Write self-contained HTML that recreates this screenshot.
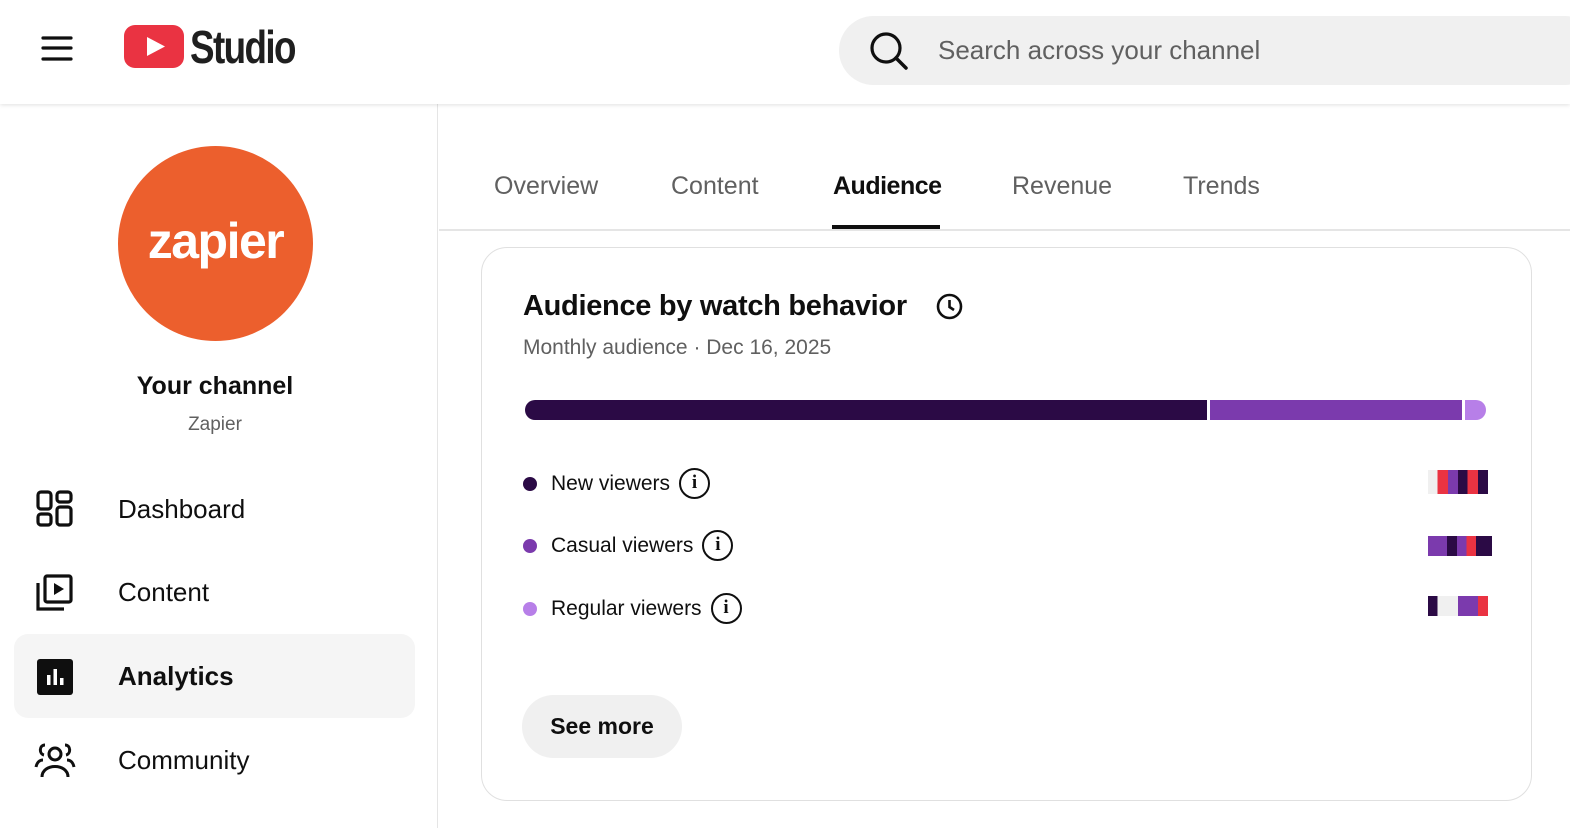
<!DOCTYPE html>
<html><head><meta charset="utf-8"><style>
*{margin:0;padding:0;box-sizing:border-box}
body{width:1570px;height:828px;overflow:hidden;background:#fff;font-family:"Liberation Sans",Roboto,sans-serif;color:#0f0f0f;position:relative}
.hdr{position:absolute;left:0;top:0;width:1570px;height:104px;background:#fff;box-shadow:0 1px 4px rgba(0,0,0,.12);z-index:2}
.search{position:absolute;left:839px;top:16px;width:760px;height:69px;border-radius:35px;background:#f0f0f0}
.search span{position:absolute;left:99px;top:19px;font-size:26px;color:#606060}
.side{position:absolute;left:0;top:104px;width:438px;height:724px;border-right:1px solid #e5e5e5}
.av{position:absolute;left:118px;top:146px;width:195px;height:195px;border-radius:50%;background:#EC5F2D;color:#fff;font-weight:bold;font-size:50px;text-align:center;line-height:190px;letter-spacing:-1.5px}
.nav{position:absolute;left:118px;font-size:26px}
.tab{position:absolute;top:172px;font-size:25px;color:#606060}
.card{position:absolute;left:481px;top:247px;width:1051px;height:554px;border:1px solid #e0e0e0;border-radius:26px}
.leg{position:absolute;left:523px;font-size:21px;display:flex;align-items:center}
.dot{width:14px;height:14px;border-radius:50%;margin-right:14px}
.i{width:31px;height:31px;border:2.5px solid #0f0f0f;border-radius:50%;margin-left:9px;font-weight:bold;font-family:"Liberation Serif",serif;font-size:19px;text-align:center;line-height:26px}
</style></head><body>
<div class="hdr">
 <svg style="position:absolute;left:40px;top:35px" width="34" height="28"><g stroke="#0f0f0f" stroke-width="3.2" stroke-linecap="round"><line x1="3" y1="3" x2="31" y2="3"/><line x1="3" y1="13" x2="31" y2="13"/><line x1="3" y1="24" x2="31" y2="24"/></g></svg>
 <svg style="position:absolute;left:124px;top:25px" width="60" height="43"><rect width="60" height="43" rx="11" fill="#EA3342"/><path d="M23 12 L41 21.5 L23 31Z" fill="#fff"/></svg>
 <div style="position:absolute;left:190px;top:20px;font-size:46px;font-weight:bold;letter-spacing:-2px;transform:scaleX(.8);transform-origin:left;color:#1f1f1f">Studio</div>
 <div class="search"><svg style="position:absolute;left:29px;top:14px" width="42" height="42"><circle cx="18" cy="18" r="14" fill="none" stroke="#0f0f0f" stroke-width="3.2"/><line x1="28" y1="28" x2="38" y2="38" stroke="#0f0f0f" stroke-width="3.5" stroke-linecap="round"/></svg><span>Search across your channel</span></div>
</div>
<div class="side"></div>
<div class="av">zapier</div>
<div style="position:absolute;left:0;width:430px;text-align:center;top:372px;font-size:25px;font-weight:bold;color:#0f0f0f">Your channel</div>
<div style="position:absolute;left:0;width:430px;text-align:center;top:414px;font-size:19px;color:#606060">Zapier</div>
<div style="position:absolute;left:14px;top:634px;width:401px;height:84px;border-radius:14px;background:#f5f5f5"></div>
<svg style="position:absolute;left:36px;top:490px" width="38" height="38" fill="none" stroke="#0f0f0f" stroke-width="3.2"><rect x="2" y="2" width="13" height="17" rx="3"/><rect x="2" y="24" width="13" height="11" rx="3"/><rect x="21" y="2" width="14" height="10" rx="3"/><rect x="21" y="17" width="14" height="18" rx="3"/></svg>
<div class="nav" style="top:494px">Dashboard</div>
<svg style="position:absolute;left:36px;top:574px" width="38" height="38" fill="none" stroke="#0f0f0f" stroke-width="3.2"><rect x="9" y="2" width="26" height="26" rx="2"/><path d="M2 9 V35 H28" /><path d="M18 9 L28 15 L18 21Z" fill="#0f0f0f" stroke="none"/></svg>
<div class="nav" style="top:577px">Content</div>
<svg style="position:absolute;left:37px;top:659px" width="36" height="36"><rect width="36" height="36" rx="3" fill="#0f0f0f"/><g fill="#fff"><rect x="10" y="16" width="3.5" height="10"/><rect x="16.5" y="10" width="3.5" height="16"/><rect x="23" y="19" width="3.5" height="7"/></g></svg>
<div class="nav" style="top:661px;font-weight:bold">Analytics</div>
<svg style="position:absolute;left:33px;top:741px" width="44" height="38" fill="none" stroke="#0f0f0f" stroke-width="3"><circle cx="22" cy="13" r="6"/><path d="M9 36 C9 22 35 22 35 36"/><path d="M12 4 C6 4 6 13 11 14 M3 26 C4 21 7 19 10 19"/><path d="M32 4 C38 4 38 13 33 14 M41 26 C40 21 37 19 34 19"/></svg>
<div class="nav" style="top:745px">Community</div>
<div style="position:absolute;left:439px;top:229px;width:1131px;height:2px;background:#e5e5e5"></div>
<div class="tab" style="left:494px">Overview</div>
<div class="tab" style="left:671px">Content</div>
<div class="tab" style="left:833px;color:#0f0f0f;font-weight:bold;letter-spacing:-0.5px">Audience</div>
<div class="tab" style="left:1012px">Revenue</div>
<div class="tab" style="left:1183px">Trends</div>
<div style="position:absolute;left:832px;top:225px;width:108px;height:4px;background:#0f0f0f"></div>
<div class="card"></div>
<div style="position:absolute;left:523px;top:290px;font-size:29px;font-weight:bold;letter-spacing:-0.3px">Audience by watch behavior</div>
<svg style="position:absolute;left:935px;top:292px" width="29" height="29" fill="none" stroke="#0f0f0f" stroke-width="2.6"><circle cx="14.5" cy="14.5" r="11.5"/><path d="M14.5 8 V15 L19 18"/></svg>
<div style="position:absolute;left:523px;top:336px;font-size:21px;color:#606060">Monthly audience · Dec 16, 2025</div>
<div style="position:absolute;left:525px;top:400px;width:682px;height:20px;background:#2B0A45;border-radius:10px 0 0 10px"></div>
<div style="position:absolute;left:1210px;top:400px;width:252px;height:20px;background:#7B3AAD"></div>
<div style="position:absolute;left:1465px;top:400px;width:21px;height:20px;background:#B77FE8;border-radius:0 10px 10px 0"></div>
<div class="leg" style="top:468px"><div class="dot" style="background:#2B0A45"></div>New viewers<div class="i">i</div></div>
<div class="leg" style="top:530px"><div class="dot" style="background:#7B3AAD"></div>Casual viewers<div class="i">i</div></div>
<div class="leg" style="top:593px"><div class="dot" style="background:#B77FE8"></div>Regular viewers<div class="i">i</div></div>
<div style="position:absolute;left:1428px;top:470px;width:60px;height:24px;background:linear-gradient(90deg,#f0f0f0 0 16%,#EA3342 16% 33%,#7B3AAD 33% 50%,#2B0A45 50% 66%,#EA3342 66% 83%,#2B0A45 83%)"></div>
<div style="position:absolute;left:1428px;top:536px;width:64px;height:20px;background:linear-gradient(90deg,#7B3AAD 0 30%,#2B0A45 30% 45%,#7B3AAD 45% 60%,#EA3342 60% 75%,#2B0A45 75%)"></div>
<div style="position:absolute;left:1428px;top:596px;width:60px;height:20px;background:linear-gradient(90deg,#2B0A45 0 16%,#f0f0f0 16% 50%,#7B3AAD 50% 83%,#EA3342 83%)"></div>
<div style="position:absolute;left:522px;top:695px;width:160px;height:63px;border-radius:32px;background:#f0f0f0;font-size:23px;font-weight:bold;text-align:center;line-height:63px">See more</div>
</body></html>
